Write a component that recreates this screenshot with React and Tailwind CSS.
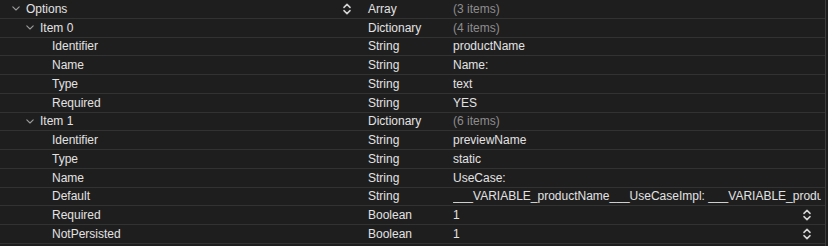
import React from 'react';

const rows = [
  { key: 'Options', level: 0, open: true, type: 'Array', value: '(3 items)', dim: true, keyStepper: true },
  { key: 'Item 0', level: 1, open: true, type: 'Dictionary', value: '(4 items)', dim: true },
  { key: 'Identifier', level: 2, type: 'String', value: 'productName' },
  { key: 'Name', level: 2, type: 'String', value: 'Name:' },
  { key: 'Type', level: 2, type: 'String', value: 'text' },
  { key: 'Required', level: 2, type: 'String', value: 'YES' },
  { key: 'Item 1', level: 1, open: true, type: 'Dictionary', value: '(6 items)', dim: true },
  { key: 'Identifier', level: 2, type: 'String', value: 'previewName' },
  { key: 'Type', level: 2, type: 'String', value: 'static' },
  { key: 'Name', level: 2, type: 'String', value: 'UseCase:' },
  {
    key: 'Default',
    level: 2,
    type: 'String',
    value: '___VARIABLE_productName___UseCaseImpl: ___VARIABLE_productName___UseCase',
  },
  { key: 'Required', level: 2, type: 'Boolean', value: '1', valueStepper: true },
  { key: 'NotPersisted', level: 2, type: 'Boolean', value: '1', valueStepper: true },
];

// indent per level, chevron sits 14px before the text
const indents = ['pl-[12px]', 'pl-[26px]', 'pl-[52px]'];

const Disclosure = () => (
  <svg width="8" height="5" viewBox="0 0 8 5" className="mr-[6px] shrink-0">
    <path d="M0.8 0.8 L4 4 L7.2 0.8" fill="none" stroke="#9b9b9b" strokeWidth="1.1" strokeLinecap="round" strokeLinejoin="round" />
  </svg>
);

const Stepper = () => (
  <svg width="8" height="12" viewBox="0 0 8 12" className="shrink-0">
    <path d="M1 4.4 L4 1.4 L7 4.4" fill="none" stroke="#d4d4d4" strokeWidth="1.5" strokeLinecap="round" strokeLinejoin="round" />
    <path d="M1 7.6 L4 10.6 L7 7.6" fill="none" stroke="#d4d4d4" strokeWidth="1.5" strokeLinecap="round" strokeLinejoin="round" />
  </svg>
);

const App = () => {
  return (
    <div
      className="w-[828px] h-[246px] bg-[#1f1e1f] text-[#e2e2e2] text-[12px] overflow-hidden"
      style={{ fontFamily: '"Liberation Sans", Arial, sans-serif' }}
    >
      <div className="w-[826px] h-full border-r border-[#3c3c3c]">
        {rows.map((row, i) => (
          <div key={i} className="flex items-center h-[18.75px] border-b border-[#323232]">
            {/* Key column */}
            <div className={`flex items-center w-[340px] shrink-0 ${indents[row.level]}`}>
              {row.open && <Disclosure />}
              <span className="whitespace-nowrap">{row.key}</span>
            </div>
            <div className="w-[28px] shrink-0 flex items-center pl-[3px]">
              {row.keyStepper && <Stepper />}
            </div>

            {/* Type column */}
            <div className="w-[85px] shrink-0 whitespace-nowrap">{row.type}</div>

            {/* Value column */}
            <div className="flex items-center flex-1 min-w-0 pr-[4px]">
              <span
                className={`flex-1 min-w-0 whitespace-nowrap overflow-hidden ${
                  row.dim ? 'text-[#8d8d8d]' : ''
                }`}
              >
                {row.value}
              </span>
              {row.valueStepper && (
                <div className="mr-[10px]">
                  <Stepper />
                </div>
              )}
            </div>
          </div>
        ))}
      </div>
    </div>
  );
};

export default App;
